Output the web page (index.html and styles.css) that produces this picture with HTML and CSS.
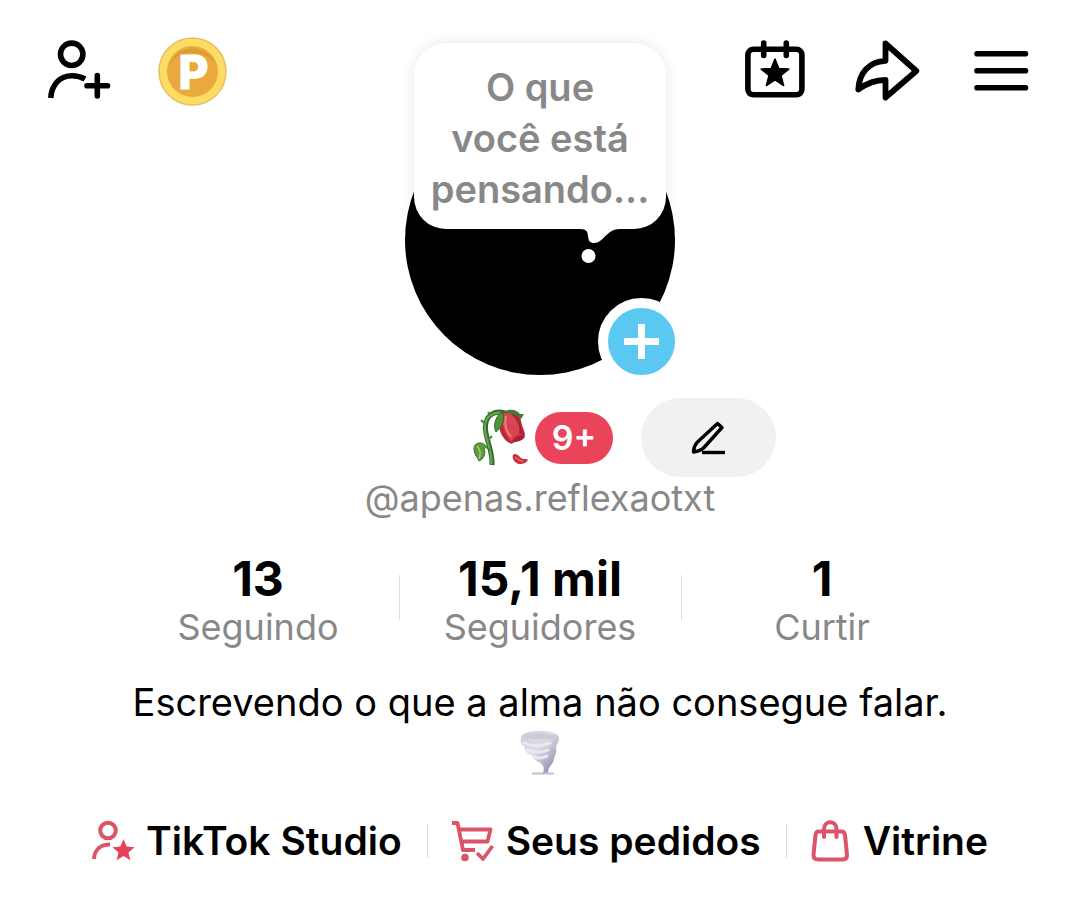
FILE: index.html
```html
<!DOCTYPE html>
<html lang="pt-BR">
<head>
  <meta charset="UTF-8">
  <meta name="viewport" content="width=device-width, initial-scale=1.0">
  <title>Perfil</title>
  <link rel="stylesheet" href="styles.css">
</head>
<body>

  <header class="topbar">
    <div class="topbar-group">
      <button class="icon-button" aria-label="Adicionar amigos">
        <svg width="62" height="68" viewBox="0 0 62 68" fill="none" stroke="#000" stroke-width="5.6">
          <circle cx="23.7" cy="17.3" r="11.2"/>
          <path d="M2.8 61C3.5 47 12.5 38.8 24 38.8C29 38.8 33 39.8 37 42"/>
          <path d="M49.3 38.5v20.5M39 48.7h20.5" stroke-linecap="round"/>
        </svg>
      </button>
      <button class="icon-button" aria-label="Recompensas">
        <svg width="70" height="68" viewBox="0 0 70 68">
          <circle cx="34.5" cy="34.5" r="33.5" fill="#fcdc62" stroke="#e9bd62" stroke-width="1.5"/>
          <circle cx="34.5" cy="34.5" r="25.5" fill="#e9a93c"/>
          <path d="M11 28a25 25 0 0 1 47 0a27 24 0 0 0-47 0z" fill="#dc9b35"/>
          <text class="coin-letter" x="35.5" y="52" text-anchor="middle">P</text>
        </svg>
      </button>
    </div>
    <div class="topbar-group">
      <button class="icon-button" aria-label="Eventos">
        <svg width="64" height="68" viewBox="0 0 64 68" fill="none" stroke="#000" stroke-width="5.6">
          <rect x="3.9" y="12.3" width="54" height="45.5" rx="5.5"/>
          <path d="M19.7 6v12.5M42.3 6v12.5" stroke-linecap="round"/>
          <path d="M31 22l3.8 9.600 10 .5-7.800 6.400 2.600 10-8.600-5.600-8.600 5.600 2.600-10-7.800-6.400 10-.5z" fill="#000" stroke-width="1.5" stroke-linejoin="round"/>
        </svg>
      </button>
      <button class="icon-button" aria-label="Compartilhar">
        <svg width="70" height="68" viewBox="0 0 70 68" fill="none" stroke="#000" stroke-width="5.8" stroke-linejoin="round">
          <path d="M29.5 6.5L60.3 34L29.5 60.5V43C20 43 11 46 2.3 52.5C3 36 13 24.5 29.5 23.8z"/>
        </svg>
      </button>
      <button class="icon-button" aria-label="Menu">
        <svg width="56" height="68" viewBox="0 0 56 68" stroke="#000" stroke-width="5.6" stroke-linecap="round">
          <path d="M3 16.7h48.5M3 33.7h48.5M3 50.7h48.5"/>
        </svg>
      </button>
    </div>
  </header>

  <main class="profile">
    <div class="avatar">
      <button class="thought">
        O que<br>você está<br>pensando...
        <svg class="thought-tail" width="48" height="36" viewBox="0 0 48 36" fill="#fff">
          <path d="M0 -1V0C7 0 7.5 3 8 7C8.5 12 10 14 14 14C24 14 26 0 40 0V-1z"/>
          <circle cx="8.5" cy="27" r="7"/>
        </svg>
      </button>
      <button class="add-story" aria-label="Criar story">
        <svg width="35" height="35" viewBox="0 0 35 35" stroke="#fff" stroke-width="7">
          <path d="M17.5 0v35M0 17.5h35"/>
        </svg>
      </button>
    </div>

    <div class="name-row">
      <div class="name">
        <svg class="rose" width="56" height="58" viewBox="0 0 56 58" role="img" aria-label="Rosa murcha">
          <path d="M19 56C20 40 11 28 12.5 16C13.5 6 22 1 32 4" fill="none" stroke="#2f6b2f" stroke-width="5"/>
          <path d="M18.5 55C19.5 40 10.5 28 12 16C13 7 21 2 31 4" fill="none" stroke="#6fa84c" stroke-width="2"/>
          <path d="M12 15l-4-4M15 31l4-4M17 6l-2-3" stroke="#4a8736" stroke-width="2"/>
          <path d="M17 42C13 37 11 34 7 34C3 34 1 36 1 40C1 45 4 47 6 52C11 50 13 45 11 38" fill="#5c9b42" stroke="#2f6b2f"/>
          <path d="M4 37C8 41 8 45 6 50" fill="none" stroke="#a7cb6d" stroke-width="1.5"/>
          <path d="M28 4C36-1 47 2 48 12C49 18 52 22 52 26C48 32 42 30 39 35C32 33 27 25 26 17z" fill="#bd2635"/>
          <path d="M30 5C28 14 31 25 39 33C41 28 43 26 48 26C47 16 43 7 36 3z" fill="#d94450"/>
          <path d="M39 5C46 10 48 18 47 25" fill="none" stroke="#9c2030" stroke-width="1.5"/>
          <path d="M33 7C31 15 33 22 38 28" fill="none" stroke="#ee7b80" stroke-width="2"/>
          <path d="M39 34c3-6 7-8 13-7c-2 6-8 5-13 7z" fill="#a32232"/>
          <path d="M28 3C22 9 20 17 23 23C28 19 32 12 30 5z" fill="#4f933b" stroke="#2f6b2f"/>
          <path d="M30 3C38-1 44 1 47 5L51 5L48 10C43 5 37 4 30 4z" fill="#3b7d34"/>
          <path d="M40 46c3-3 6 1 8 3c3 2 6 0 7 2c-3 5-10 5-13 2c-2-2-3-5-2-7z" fill="#c92f40"/>
          <path d="M42 48c2 2 4 4 8 4" fill="none" stroke="#e8686f" stroke-width="1.5"/>
        </svg>
        <span class="badge">9+</span>
      </div>
      <button class="edit" aria-label="Editar perfil">
        <svg width="36" height="36" viewBox="0 0 36 36" fill="none" stroke="#000" stroke-width="3.4" stroke-linejoin="round">
          <path d="M26.5 3.5L31 7.5L13 27.5C10 30.5 6 31.5 2.5 32C2.5 28.5 3.5 25.5 6 22.5z"/>
          <path d="M11 32.5h23"/>
        </svg>
      </button>
    </div>

    <p class="handle">@apenas.reflexaotxt</p>

    <div class="stats">
      <a class="stat" href="#seguindo"><strong>13</strong><span>Seguindo</span></a>
      <a class="stat" href="#seguidores"><strong>15,1 mil</strong><span>Seguidores</span></a>
      <a class="stat" href="#curtir"><strong>1</strong><span>Curtir</span></a>
    </div>

    <p class="bio">
      Escrevendo o que a alma não consegue falar.<br>
      <svg class="tornado" width="42" height="46" viewBox="0 0 42 46" role="img" aria-label="Tornado">
        <defs>
          <linearGradient id="cloud" x1="0" x2="1" y1="0" y2="1">
            <stop offset="0" stop-color="#d0cfd9"/>
            <stop offset=".45" stop-color="#dddae6"/>
            <stop offset="1" stop-color="#83779b"/>
          </linearGradient>
        </defs>
        <path d="M2 8C2 3 10 1 21 1C33 1 41 4 40 9C39 14 37 15 37 18C38 23 36 25 35 28C35 34 29 36 29 43H24C26 37 24 35 20 32C15 30 13 27 13 25C7 23 5 20 6 17C2 15 1 12 2 8z" fill="url(#cloud)"/>
        <path d="M4 7C10 3 30 2 38 7C31 10 12 10 4 7z" fill="#cbcad5"/>
        <path d="M5 13c9 4 19 3 26 0M8 20c8 3 15 3 21 0M15 27c5 2 9 1 13-1" fill="none" stroke="#eae8f0" stroke-width="3" stroke-linecap="round"/>
        <path d="M14 43.5h20" stroke="#c3c0c9" stroke-width="2" stroke-linecap="round"/>
      </svg>
    </p>

    <nav class="shortcuts">
      <a class="shortcut" href="#studio">
        <svg width="42" height="42" viewBox="0 0 42 42" fill="none" stroke="#dc5468" stroke-width="4">
          <circle cx="16" cy="10.5" r="7.8"/>
          <path d="M2 39C2.5 30 8 24.5 18 24.5"/>
          <path d="M31.5 19l3.2 7.5 7.8.7-6 5.2 1.9 7.8-6.9-4.2-6.9 4.2 1.9-7.8-6-5.2 7.8-.7z" fill="#e8425a" stroke="none"/>
        </svg>
        TikTok Studio
      </a>
      <a class="shortcut" href="#pedidos">
        <svg width="42" height="42" viewBox="0 0 42 42" fill="none" stroke="#dc5468" stroke-width="3.8" stroke-linejoin="round">
          <path d="M0 3h5.5L11 30h12M7.5 9.5H38.5L35.5 21.5H10"/>
          <circle cx="13" cy="37.5" r="3.8" fill="#dc5468" stroke="none"/>
          <path d="M25 33l6 6L40.5 26"/>
        </svg>
        Seus pedidos
      </a>
      <a class="shortcut" href="#vitrine">
        <svg width="40" height="42" viewBox="0 0 40 42" fill="none" stroke="#dc5468" stroke-width="4" stroke-linejoin="round" stroke-linecap="round">
          <path d="M7.5 11.5H30.5Q33.5 11.5 34 15L36 35Q36 39.5 32 39.5H7Q2.5 39.5 2.5 35L4.5 15Q5 11.5 7.5 11.5z"/>
          <path d="M13 17V9C13 0 25.5 0 25.5 9V17"/>
        </svg>
        Vitrine
      </a>
    </nav>
  </main>

</body>
</html>
```

FILE: styles.css
```css
* {
  box-sizing: border-box;
}

body {
  margin: 0;
  font-family: Inter, "Noto Sans", sans-serif;
  font-size: 36px;
  background-color: #fff;
  color: #000;
}

button {
  padding: 0;
  border: none;
  background: none;
  font-family: inherit;
  cursor: pointer;
}

a {
  color: inherit;
  text-decoration: none;
}

svg {
  display: block;
  flex-shrink: 0;
  overflow: visible;
}

p {
  margin: 0;
}

.topbar {
  display: flex;
  justify-content: space-between;
  padding: 37px 50px 0 48px;
}

.topbar-group {
  display: flex;
  gap: 48px;
}

.coin-letter {
  font-size: 46px;
  font-weight: 800;
  fill: #fff;
  stroke: #fff;
  stroke-width: 1px;
  stroke-linejoin: round;
}

.profile {
  display: flex;
  flex-direction: column;
  align-items: center;
  text-align: center;
}

.avatar {
  position: relative;
  width: 270px;
  height: 270px;
  border-radius: 50%;
  background-color: #000;
}

/* Bubble floats over the top of the avatar */
.thought {
  position: absolute;
  left: 9px;
  bottom: 146px;
  width: 252px;
  padding: 19px 0 14px;
  border-radius: 32px;
  background-color: #fff;
  box-shadow: 0 0 14px rgba(0, 0, 0, 0.1);
  color: #888;
  font-size: 38px;
  font-weight: 600;
  line-height: 51px;
}

.thought-tail {
  position: absolute;
  top: 100%;
  left: 166px;
}

.add-story {
  position: absolute;
  right: -10px;
  bottom: -10px;
  display: flex;
  align-items: center;
  justify-content: center;
  width: 87px;
  height: 87px;
  border: 10px solid #fff;
  border-radius: 50%;
  background-color: #5bc8f2;
}

.name-row {
  display: grid;
  grid-template-columns: 1fr auto 1fr;
  align-items: center;
  width: 100%;
  margin-top: 23px;
}

.name {
  display: flex;
  grid-column: 2;
  align-items: center;
  gap: 6px;
  padding-left: 6px;
}

.badge {
  width: 78px;
  border-radius: 26px;
  background-color: #ea445a;
  color: #fff;
  font-size: 34px;
  font-weight: 600;
  line-height: 52px;
}

.edit {
  display: flex;
  align-items: center;
  justify-content: center;
  width: 135px;
  height: 79px;
  margin-left: 28px;
  border-radius: 40px;
  background-color: #f1f1f1;
}

.handle {
  color: #888;
  line-height: 42px;
}

.stats {
  display: grid;
  grid-template-columns: repeat(3, 1fr);
  width: 100%;
  max-width: 846px;
  margin-top: 36px;
}

.stat {
  display: flex;
  flex-direction: column;
  position: relative;
  line-height: 48px;
}

.stat strong {
  font-size: 48px;
  font-weight: 700;
}

.stat span {
  color: #888;
}

.stat + .stat::before {
  content: "";
  position: absolute;
  left: 0;
  top: 20px;
  width: 1px;
  height: 45px;
  background-color: #ddd;
}

.bio {
  margin-top: 26px;
  font-size: 38px;
  line-height: 51px;
}

.tornado {
  margin: 2px auto 3px;
}

.shortcuts {
  display: flex;
  justify-content: center;
  margin-top: 38px;
  font-size: 39px;
  font-weight: 600;
  line-height: 48px;
}

.shortcut {
  display: flex;
  align-items: center;
  gap: 12px;
  position: relative;
  padding: 0 25px;
  white-space: nowrap;
}

.shortcut + .shortcut::before {
  content: "";
  position: absolute;
  left: 0;
  top: 7px;
  width: 1px;
  height: 34px;
  background-color: #ddd;
}
```
